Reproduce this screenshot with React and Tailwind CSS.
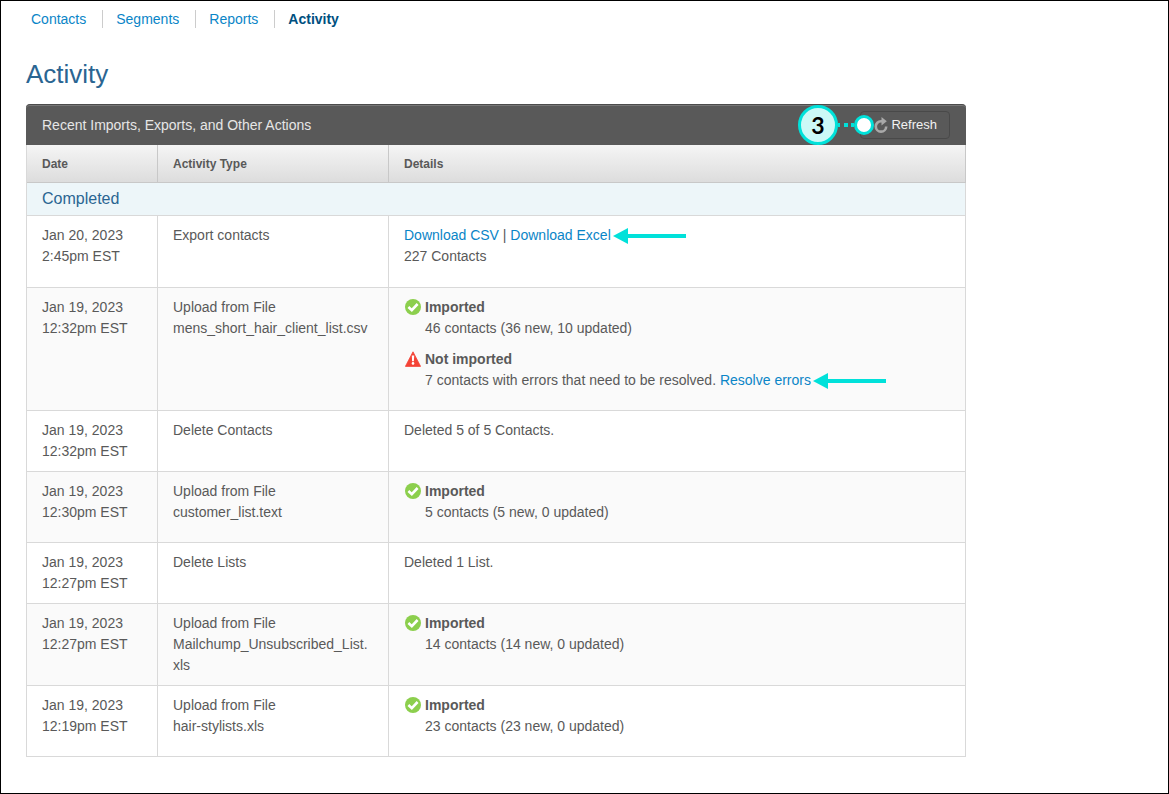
const navLinks = ['Contacts', 'Segments', 'Reports', 'Activity'];

const activities = [
  {
    date: 'Jan 20, 2023',
    time: '2:45pm EST',
    type: 'Export contacts',
    downloads: ['Download CSV', 'Download Excel'],
    summary: '227 Contacts',
  },
  {
    date: 'Jan 19, 2023',
    time: '12:32pm EST',
    type: 'Upload from File',
    file: 'mens_short_hair_client_list.csv',
    imported: '46 contacts (36 new, 10 updated)',
    failed: '7 contacts with errors that need to be resolved.',
  },
  { date: 'Jan 19, 2023', time: '12:32pm EST', type: 'Delete Contacts', note: 'Deleted 5 of 5 Contacts.' },
  {
    date: 'Jan 19, 2023',
    time: '12:30pm EST',
    type: 'Upload from File',
    file: 'customer_list.text',
    imported: '5 contacts (5 new, 0 updated)',
  },
  { date: 'Jan 19, 2023', time: '12:27pm EST', type: 'Delete Lists', note: 'Deleted 1 List.' },
  {
    date: 'Jan 19, 2023',
    time: '12:27pm EST',
    type: 'Upload from File',
    file: 'Mailchump_Unsubscribed_List.xls',
    imported: '14 contacts (14 new, 0 updated)',
  },
  {
    date: 'Jan 19, 2023',
    time: '12:19pm EST',
    type: 'Upload from File',
    file: 'hair-stylists.xls',
    imported: '23 contacts (23 new, 0 updated)',
  },
];

function CheckIcon() {
  return (
    <svg className="w-4 h-4" viewBox="0 0 16 16" fill="none" aria-hidden="true">
      <circle cx="8" cy="8" r="8" fill="#8ccf4d" />
      <path d="M3.4 8 6.8 11.2 12.6 5" stroke="#fff" strokeWidth="2.6" />
    </svg>
  );
}

function WarningIcon() {
  return (
    <svg className="w-4 h-4" viewBox="0 0 16 16" aria-hidden="true">
      <path d="M8 .8 15.6 15.4H.4Z" fill="#f44336" stroke="#f44336" strokeWidth=".8" strokeLinejoin="round" />
      <path d="M6.8 4.5h2.4l-.3 5.700H7.100Z" fill="#fff" />
      <circle cx="8" cy="12.400" r="1.300" fill="#fff" />
    </svg>
  );
}

function RefreshIcon() {
  return (
    <svg className="w-[14px] h-4" viewBox="0 0 14 16" fill="none" aria-hidden="true">
      <path d="M8 4.200H7A5.200 5.200 0 1 0 12.200 9.400" stroke="#a9a9a9" strokeWidth="2.600" />
      <path d="M7.500 0 12.800 4.300 7.500 8.600Z" fill="#a9a9a9" />
    </svg>
  );
}

function Arrow() {
  return (
    <svg className="inline-block w-[73px] h-4 ml-0.5 align-[-4px]" viewBox="0 0 73 16" aria-hidden="true">
      <path d="M0 8 15 0V6H73V10H15V16Z" fill="#00e1da" />
    </svg>
  );
}

// Numbered step marker with a dotted lead to the refresh button
function StepMarker({ number }) {
  return (
    <div className="absolute right-[76px] top-1/2 -translate-y-1/2 flex items-center pointer-events-none">
      <span className="flex items-center justify-center w-10 h-10 rounded-full border-3 border-[#00e1da] bg-[#ccf9f7] text-black text-[23px] font-bold font-[Lato,sans-serif]">
        {number}
      </span>
      <svg className="w-4 h-1" viewBox="0 0 16 4" aria-hidden="true">
        <path d="M0 0h2v4H0ZM6 0h4v4H6ZM13 0h3v4h-3Z" fill="#00e1da" />
      </svg>
      <span className="w-5 h-5 rounded-full border-3 border-[#00e1da] bg-white"></span>
    </div>
  );
}

function Details({ item }) {
  if (item.note) return item.note;

  return (
    <>
      {item.downloads && (
        <div className="mb-[11px]">
          <p>
            <a href="#csv" className="text-[#0a85c7]">{item.downloads[0]}</a>
            {' | '}
            <a href="#excel" className="text-[#0a85c7]">{item.downloads[1]}</a>
            <Arrow />
          </p>
          <p>{item.summary}</p>
        </div>
      )}
      {item.imported && (
        <div className="flex gap-1 mb-[10px] pl-px">
          <div className="pt-0.5"><CheckIcon /></div>
          <div>
            <p className="font-bold">Imported</p>
            <p>{item.imported}</p>
          </div>
        </div>
      )}
      {item.failed && (
        <div className="flex gap-1 mb-[10px] pl-px">
          <div className="pt-0.5"><WarningIcon /></div>
          <div>
            <p className="font-bold">Not imported</p>
            <p>
              {item.failed}{' '}
              <a href="#resolve" className="text-[#0a85c7]">Resolve errors</a>
              <Arrow />
            </p>
          </div>
        </div>
      )}
    </>
  );
}

export default function App() {
  return (
    <div className="min-h-screen border border-black bg-white px-[25px] pb-9 font-['Liberation_Sans',Arial,sans-serif] text-sm text-[#595959]">
      {/* Section nav */}
      <nav className="flex items-center pt-[9px] pl-[5px]">
        {navLinks.map((link) => (
          <a
            key={link}
            href={`#${link.toLowerCase()}`}
            className={
              link === 'Activity'
                ? 'pl-[13px] leading-[18px] font-bold text-[#00507f]'
                : 'pr-4 leading-[18px] border-r border-[#ccc] text-[#0a85c7] not-first:pl-[13px]'
            }
          >
            {link}
          </a>
        ))}
      </nav>

      <h1 className="mt-7 mb-3 text-[26px] leading-9 text-[#2a6592]">Activity</h1>

      <main className="max-w-[940px]">
        <div className="flex items-center justify-between h-[41px] px-4 rounded-t border-t border-[#4c4c4c] bg-[#595959] shadow-[inset_0_1px_0_#777]">
          <h2 className="text-[#e6e6e6]">Recent Imports, Exports, and Other Actions</h2>
          <div className="relative">
            <button
              type="button"
              className="flex items-center gap-[3px] h-7 pl-[13px] pr-3 rounded border border-[#494949] text-[13px] text-[#f2f2f2]"
            >
              <RefreshIcon />
              Refresh
            </button>
            <StepMarker number={3} />
          </div>
        </div>

        <table className="w-full table-fixed border-separate border-spacing-0 border-l border-[#d9d9d9] text-left">
          <colgroup>
            <col className="w-[131px]" />
            <col className="w-[231px]" />
            <col />
          </colgroup>
          <thead>
            <tr className="bg-linear-to-b from-[#f5f5f5] to-[#dcdcdc] text-xs">
              {['Date', 'Activity Type', 'Details'].map((title) => (
                <th key={title} scope="col" className="h-[38px] px-[15px] border-r border-b border-[#c8c8c8] font-bold">
                  {title}
                </th>
              ))}
            </tr>
          </thead>
          <tbody>
            <tr className="bg-[#edf6f9]">
              <th
                colSpan={3}
                scope="colgroup"
                className="h-[33px] px-[15px] border-r border-b border-[#d9d9d9] text-base font-normal text-[#2a6592]"
              >
                Completed
              </th>
            </tr>
            {activities.map((item, i) => (
              <tr key={i} className="align-top leading-[21px] even:bg-white odd:bg-[#fafafa]">
                <td className="px-[15px] py-[9px] border-r border-b border-[#d9d9d9]">
                  {item.date}
                  <br />
                  {item.time}
                </td>
                <td className="px-[15px] py-[9px] border-r border-b border-[#d9d9d9] wrap-break-word">
                  {item.type}
                  {item.file && (
                    <>
                      <br />
                      {item.file}
                    </>
                  )}
                </td>
                <td className="px-[15px] py-[9px] border-r border-b border-[#d9d9d9]">
                  <Details item={item} />
                </td>
              </tr>
            ))}
          </tbody>
        </table>
      </main>
    </div>
  );
}
